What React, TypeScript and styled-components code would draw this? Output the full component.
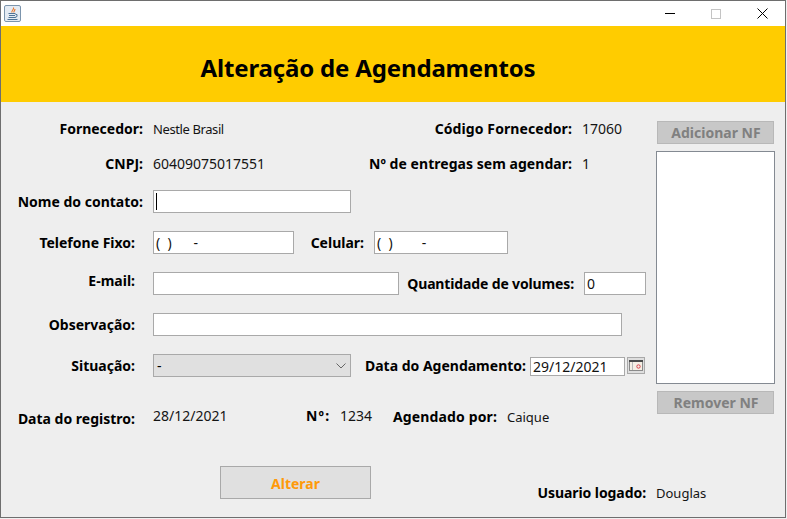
import React from "react";
import styled, { createGlobalStyle } from "styled-components";

const Global = createGlobalStyle`
  html, body { margin: 0; padding: 0; background: #f0f0f0; }
  body { width: 787px; height: 519px; overflow: hidden; font-family: "Noto Sans", "Liberation Sans", sans-serif; color: #000; }
  * { box-sizing: border-box; }
`;

const Win = styled.div`
  width: 786px;
  height: 518px;
  border: 1px solid #6e6e6e;
  display: flex;
  flex-direction: column;
  background: #eeeeee;
`;
const TitleBar = styled.div`
  height: 25px;
  flex: none;
  background: #fff;
  display: flex;
  align-items: center;
  padding-left: 3px;
`;
const Controls = styled.div`
  margin-left: auto;
  display: flex;
  align-items: center;
`;
const Ctl = styled.div`
  width: 46px;
  height: 25px;
  display: flex;
  align-items: center;
  justify-content: center;
`;
const Banner = styled.div`
  height: 76px;
  flex: none;
  background: #ffcc00;
  display: flex;
  align-items: center;
  justify-content: center;
  padding: 8px 50px 0 0;
`;
const Title = styled.h1`
  margin: 0;
  font-size: 24px;
  line-height: 32px;
  font-weight: 700;
  letter-spacing: -0.16px;
`;
const Content = styled.div`
  flex: 1;
  display: flex;
`;
const Main = styled.div`
  width: 655px;
  display: flex;
  flex-direction: column;
`;
const Side = styled.div`
  width: 119px;
  display: flex;
  flex-direction: column;
  align-items: center;
  padding-top: 19px;
`;
const Row = styled.div<{ $h: number; $top: number }>`
  display: flex;
  align-items: center;
  height: ${(p) => p.$h}px;
  margin-top: ${(p) => p.$top}px;
`;
const Label = styled.div<{ $w: number; $gap?: number; $dy?: number; $ls?: number }>`
  width: ${(p) => p.$w}px;
  margin-right: ${(p) => p.$gap ?? 10}px;
  margin-top: ${(p) => p.$dy ?? 0}px;
  flex: none;
  text-align: right;
  font-size: 14px;
  font-weight: 700;
  line-height: 18px;
  white-space: nowrap;
  letter-spacing: ${(p) => p.$ls ?? 0}px;
`;
const Value = styled.div<{ $w?: number; $dy?: number; $small?: boolean; $tight?: boolean }>`
  width: ${(p) => (p.$w ? `${p.$w}px` : "auto")};
  margin-top: ${(p) => p.$dy ?? 0}px;
  flex: none;
  font-size: ${(p) => (p.$small ? 13 : 14)}px;
  letter-spacing: ${(p) => (p.$tight ? "-0.4px" : "normal")};
  line-height: 18px;
  white-space: nowrap;
  color: #141414;
`;
const Field = styled.div<{ $w: number; $h?: number; $dy?: number }>`
  width: ${(p) => p.$w}px;
  height: ${(p) => p.$h ?? 23}px;
  margin-top: ${(p) => p.$dy ?? 0}px;
  flex: none;
  background: #fff;
  border: 1px solid #a9a9a9;
  padding-left: 2px;
  display: flex;
  align-items: center;
  font-size: 14px;
  white-space: pre;
  color: #111;
`;
const Caret = styled.span`
  width: 1px;
  height: 17px;
  background: #000;
`;
const Select = styled.div`
  width: 198px;
  height: 23px;
  flex: none;
  background: #e0e0e0;
  border: 1px solid #a9a9a9;
  padding: 0 4px 0 3px;
  display: flex;
  align-items: center;
  justify-content: space-between;
  font-size: 14px;
`;
const DateBtn = styled.div`
  width: 18px;
  height: 17px;
  margin-left: 2px;
  flex: none;
  background: #dedede;
  border: 1px solid #a9a9a9;
  display: flex;
  align-items: center;
  justify-content: center;
`;
const SideBtn = styled.div`
  width: 117px;
  height: 23px;
  flex: none;
  background: #c8c8c8;
  border: 1px solid #b8b8b8;
  display: flex;
  align-items: center;
  justify-content: center;
  padding-left: 1px;
  font-size: 14px;
  font-weight: 700;
  color: #808080;
`;
const List = styled.div`
  width: 119px;
  height: 233px;
  flex: none;
  margin: 7px 0;
  background: #fff;
  border: 1px solid #848a92;
`;
const Submit = styled.div`
  width: 151px;
  height: 33px;
  margin-left: 219px;
  flex: none;
  background: #e0e0e0;
  border: 1px solid #a9a9a9;
  display: flex;
  align-items: center;
  justify-content: center;
  padding-top: 1px;
  font-size: 14px;
  font-weight: 700;
  color: #ff9a0a;
`;

const JavaIcon = () => (
  <svg width="17" height="17" viewBox="0 0 17 17">
    <rect x="0.5" y="0.5" width="16" height="16" rx="1.5" fill="#e4ebf3" stroke="#7c95ad" />
    <path d="M9.5 2.5c1 2-2.5 3-1.5 5M11 4c0 1.500-1.500 2-1 3.500" stroke="#e8762c" strokeWidth="1.1" fill="none" />
    <path d="M4.500 8.500h7M5 10.500h6M4.500 12.500h7" stroke="#4f7397" strokeWidth="1" fill="none" />
    <path d="M11.500 9.500h1.500v2l-2 1M3.500 14.500h10" stroke="#4f7397" strokeWidth="1" fill="none" />
  </svg>
);
const Chevron = () => (
  <svg width="10" height="6" viewBox="0 0 10 6">
    <path d="M0.500 0.500L5 5L9.500 0.500" stroke="#666" strokeWidth="1" fill="none" />
  </svg>
);
const CalIcon = () => (
  <svg width="14" height="11" viewBox="0 0 14 11">
    <rect x="0.500" y="0.500" width="13" height="10" fill="#f6efe4" stroke="#8a8a8a" />
    <rect x="0" y="0" width="14" height="2" fill="#4a4a4a" />
    <rect x="3" y="2" width="1" height="8" fill="#b9b9b9" />
    <circle cx="9.500" cy="6.500" r="1.700" fill="none" stroke="#d8404a" />
  </svg>
);

export default function App() {
  return (
    <>
      <Global />
      <Win>
        <TitleBar>
          <JavaIcon />
          <Controls>
            <Ctl>
              <svg width="10" height="1"><rect width="10" height="1" fill="#000" /></svg>
            </Ctl>
            <Ctl>
              <svg width="10" height="10"><rect x="0.500" y="0.500" width="9" height="9" fill="none" stroke="#c4c4c4" /></svg>
            </Ctl>
            <Ctl>
              <svg width="11" height="11"><path d="M0.500 0.500L10.500 10.500M10.500 0.500L0.500 10.500" stroke="#000" fill="none" /></svg>
            </Ctl>
          </Controls>
        </TitleBar>
        <Banner>
          <Title>Alteração de Agendamentos</Title>
        </Banner>
        <Content>
          <Main>
            <Row $h={18} $top={18}>
              <Label $w={142}>Fornecedor:</Label>
              <Value $w={265} $small $tight>Nestle Brasil</Value>
              <Label $w={154} $ls={0.1}>Código Fornecedor:</Label>
              <Value>17060</Value>
            </Row>
            <Row $h={18} $top={17}>
              <Label $w={142}>CNPJ:</Label>
              <Value $w={132}>60409075017551</Value>
              <Label $w={287} $ls={0.04}>Nº de entregas sem agendar:</Label>
              <Value>1</Value>
            </Row>
            <Row $h={23} $top={17}>
              <Label $w={142}>Nome do contato:</Label>
              <Field $w={198}><Caret /></Field>
            </Row>
            <Row $h={23} $top={18}>
              <Label $w={134} $gap={18} $dy={1}>Telefone Fixo:</Label>
              <Field $w={141}>{"(  )      -"}</Field>
              <Label $w={70} $dy={1}>Celular:</Label>
              <Field $w={134}>{"(  )        -"}</Field>
            </Row>
            <Row $h={23} $top={18}>
              <Label $w={134} $gap={18} $dy={-5}>E-mail:</Label>
              <Field $w={246}></Field>
              <Label $w={175} $dy={1} $ls={-0.14}>Quantidade de volumes:</Label>
              <Field $w={62}>0</Field>
            </Row>
            <Row $h={23} $top={18}>
              <Label $w={134} $gap={18}>Observação:</Label>
              <Field $w={469}></Field>
            </Row>
            <Row $h={23} $top={18}>
              <Label $w={134} $gap={18}>Situação:</Label>
              <Select>-<Chevron /></Select>
              <Label $w={175} $gap={4}>Data do Agendamento:</Label>
              <Field $w={95} $h={19} $dy={2}>29/12/2021</Field>
              <DateBtn><CalIcon /></DateBtn>
            </Row>
            <Row $h={18} $top={30}>
              <Label $w={134} $gap={18} $dy={5}>Data do registro:</Label>
              <Value $w={153}>28/12/2021</Value>
              <Label $w={24} $ls={1.2}>Nº:</Label>
              <Value $w={53}>1234</Value>
              <Label $w={104} $dy={2} $ls={0.14}>Agendado por:</Label>
              <Value $small $dy={2}>Caique</Value>
            </Row>
            <Row $h={33} $top={41}>
              <Submit>Alterar</Submit>
              <Label $w={275} $dy={20} $ls={-0.07}>Usuario logado:</Label>
              <Value $small $dy={20}>Douglas</Value>
            </Row>
          </Main>
          <Side>
            <SideBtn>Adicionar NF</SideBtn>
            <List />
            <SideBtn>Remover NF</SideBtn>
          </Side>
        </Content>
      </Win>
    </>
  );
}
